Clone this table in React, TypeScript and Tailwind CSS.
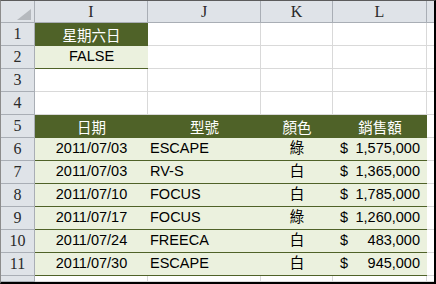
const cols = ["I", "J", "K", "L", ""];

const rows = [
  { date: "2011/07/03", model: "ESCAPE", color: "綠", amount: "1,575,000" },
  { date: "2011/07/03", model: "RV-S", color: "白", amount: "1,365,000" },
  { date: "2011/07/10", model: "FOCUS", color: "白", amount: "1,785,000" },
  { date: "2011/07/17", model: "FOCUS", color: "綠", amount: "1,260,000" },
  { date: "2011/07/24", model: "FREECA", color: "白", amount: "483,000" },
  { date: "2011/07/30", model: "ESCAPE", color: "白", amount: "945,000" },
];

const hdr =
  "flex items-center justify-center border-r border-b border-[#a9aeb5] bg-[#dfe3e8] text-[16px] leading-none text-[#2a2a2a] [font-family:'Liberation_Serif',serif]";
const cell = "border-r border-b border-[#d9d9d9] bg-white";
const dataCell =
  "flex items-center border-b border-[#4f6228] bg-[#ebf1de] text-[14.5px] text-black [font-family:'Liberation_Sans','Noto_Sans_CJK_TC',sans-serif]";
const greenCell =
  "flex items-center justify-center bg-[#4f6228] text-[14.5px] text-white [font-family:'Noto_Sans_CJK_TC',sans-serif]";

function RowNum({ n, h = "h-[23px]" }: { n: string; h?: string }) {
  return <div className={`${hdr} ${h}`}>{n}</div>;
}

export default function App() {
  return (
    <div className="h-[284px] w-[436px] overflow-hidden border-t border-l border-t-[#5c5c5c] border-l-[#8c8c8c] border-r-2 border-b-2 border-r-black border-b-black bg-white">
      <div className="grid grid-cols-[34px_113px_113px_72px_94px_7px]">
        {/* column headers */}
        <div className={`${hdr} h-[22px] items-end justify-end pr-[3px] pb-[2px]`}>
          <svg width="14" height="11" viewBox="0 0 14 11">
            <polygon points="14,0 14,11 0,11" fill="#b5b9be" />
          </svg>
        </div>
        {cols.map((c, i) => (
          <div key={i} className={`${hdr} h-[22px] ${i === 4 ? "border-r-0" : ""}`}>
            {c}
          </div>
        ))}

        {/* row 1 */}
        <RowNum n="1" />
        <div className={`${greenCell} h-[23px]`}>星期六日</div>
        <div className={`${cell} h-[23px]`} />
        <div className={`${cell} h-[23px]`} />
        <div className={`${cell} h-[23px]`} />
        <div className={`${cell} h-[23px] border-r-0`} />

        {/* row 2 */}
        <RowNum n="2" />
        <div className="flex h-[23px] items-center justify-center border-b border-b-[#4f6228] bg-[#ebf1de] text-[14.5px] text-black [font-family:'Liberation_Sans',sans-serif]">
          FALSE
        </div>
        <div className={`${cell} h-[23px]`} />
        <div className={`${cell} h-[23px]`} />
        <div className={`${cell} h-[23px]`} />
        <div className={`${cell} h-[23px] border-r-0`} />

        {/* rows 3-4 */}
        {["3", "4"].map((n) => (
          <div key={n} className="contents">
            <RowNum n={n} />
            <div className={`${cell} h-[23px]`} />
            <div className={`${cell} h-[23px]`} />
            <div className={`${cell} h-[23px]`} />
            <div className={`${cell} h-[23px]`} />
            <div className={`${cell} h-[23px] border-r-0`} />
          </div>
        ))}

        {/* row 5: table header */}
        <RowNum n="5" />
        <div className={`${greenCell} h-[23px]`}>日期</div>
        <div className={`${greenCell} h-[23px]`}>型號</div>
        <div className={`${greenCell} h-[23px]`}>顏色</div>
        <div className={`${greenCell} h-[23px]`}>銷售額</div>
        <div className={`${cell} h-[23px] border-r-0`} />

        {/* data rows */}
        {rows.map((r, i) => (
          <div key={i} className="contents">
            <RowNum n={String(i + 6)} />
            <div className={`${dataCell} h-[23px] justify-center`}>{r.date}</div>
            <div className={`${dataCell} h-[23px] pl-[2px]`}>{r.model}</div>
            <div className={`${dataCell} h-[23px] justify-center`}>{r.color}</div>
            <div className={`${dataCell} h-[23px] justify-between px-[7px]`}>
              <span>$</span>
              <span>{r.amount}</span>
            </div>
            <div className={`${cell} h-[23px] border-r-0`} />
          </div>
        ))}

        {/* row 12 (partial) */}
        <div className={`${hdr} h-[6px]`} />
        <div className={`${cell} h-[6px]`} />
        <div className={`${cell} h-[6px]`} />
        <div className={`${cell} h-[6px]`} />
        <div className={`${cell} h-[6px]`} />
        <div className={`${cell} h-[6px] border-r-0`} />
      </div>
    </div>
  );
}
